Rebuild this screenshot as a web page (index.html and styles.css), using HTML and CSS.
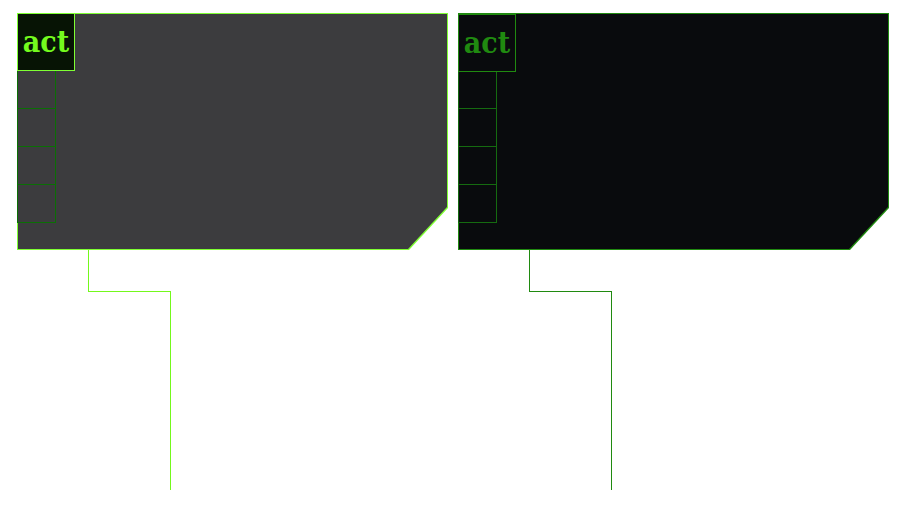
FILE: index.html
```
<!DOCTYPE html>
<html lang="en">
<head>
<meta charset="utf-8">
<title>act</title>
<link rel="stylesheet" href="styles.css">
</head>
<body>
<main class="board">
  <section class="unit unit-active">
    <div class="frame">
      <div class="panel">
        <div class="badge">act</div>
        <div class="slots">
          <div class="slot"></div><div class="slot"></div><div class="slot"></div><div class="slot"></div>
        </div>
      </div>
    </div>
    <div class="connector"><div class="elbow"></div><div class="drop"></div></div>
  </section>
  <section class="unit unit-idle">
    <div class="frame">
      <div class="panel">
        <div class="badge">act</div>
        <div class="slots">
          <div class="slot"></div><div class="slot"></div><div class="slot"></div><div class="slot"></div>
        </div>
      </div>
    </div>
    <div class="connector"><div class="elbow"></div><div class="drop"></div></div>
  </section>
</main>
</body>
</html>
```

FILE: styles.css
```
* { box-sizing: border-box; }
body { margin: 0; background: #fff; }

.board {
  display: grid;
  grid-template-columns: 1fr 1fr;
  gap: 10px;
  padding: 13px 10px 40px 17px;
}

.unit-active {
  --line: #7fff33;
  --wire: #74f81c;
  --fill: #3c3c3e;
  --badge: #071405;
  --text: #74fb1e;
  --slot: #0b6f05;
}
.unit-idle {
  --line: #208a10;
  --wire: #208a10;
  --fill: #090b0d;
  --badge: #090b0d;
  --text: #208a10;
  --slot: #156b10;
}

/* The outer layer shows through as a one-pixel outline. */
.frame, .panel {
  clip-path: polygon(0 0, 100% 0, 100% calc(100% - 42px), calc(100% - 39px) 100%, 0 100%);
}
.frame {
  display: grid;
  min-height: 237px;
  padding: 1px;
  background: var(--line);
}
.panel { background: var(--fill); }
.frame .panel { margin-left: -1px; border-left: 1px solid var(--line); }
.unit-active .panel { margin-top: -1px; border-top: 1px solid var(--line); }

.badge {
  display: flex;
  align-items: center;
  justify-content: center;
  width: 58px;
  height: 58px;
  margin-left: -1px;
  border: 1px solid var(--line);
  background: var(--badge);
  color: var(--text);
  font: bold 30px/56px "DejaVu Serif Condensed", "DejaVu Serif", serif;
}
.unit-active .badge { margin-top: -1px; }

.slots {
  width: 39px;
  margin-left: -1px;
  border: solid var(--slot);
  border-width: 0 1px;
}
.slot { height: 38px; border-bottom: 1px solid var(--slot); }
.unit-idle .slot:first-child { height: 37px; }

.connector {
  display: grid;
  grid-template-columns: 83px;
  padding-left: 71px;
}
.elbow {
  height: 42px;
  border: solid var(--wire);
  border-width: 0 0 1px 1px;
}
.drop {
  height: 198px;
  border-right: 1px solid var(--wire);
}
```
